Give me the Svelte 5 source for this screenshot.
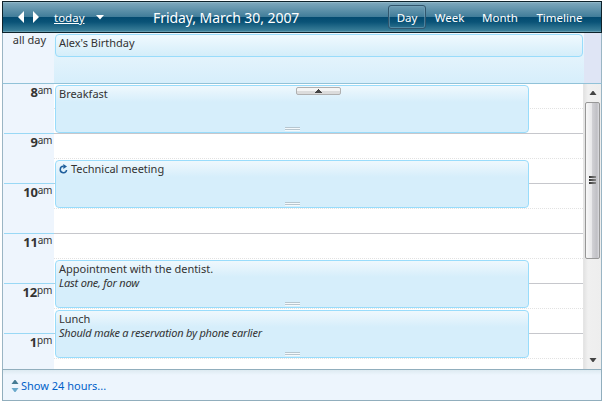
<script>
  const views = [
    { name: 'Day', w: 38 },
    { name: 'Week', w: 47 },
    { name: 'Month', w: 54 },
    { name: 'Timeline', w: 65 }
  ];
  const hours = [
    { n: 8, m: 'am' },
    { n: 9, m: 'am' },
    { n: 10, m: 'am' },
    { n: 11, m: 'am' },
    { n: 12, m: 'pm' },
    { n: 1, m: 'pm' }
  ];
  const appointments = [
    { title: 'Breakfast', gap: 1 },
    { title: 'Technical meeting', recurring: true, gap: 27 },
    { title: 'Appointment with the dentist.', note: 'Last one, for now', gap: 52 },
    { title: 'Lunch', note: 'Should make a reservation by phone earlier', gap: 2 }
  ];
</script>

<div class="scheduler">
  <header>
    <div class="nav">
      <svg width="22" height="12" viewBox="0 0 22 12" fill="#fff"><path d="M6 0v12L0 6zM15 0v12l6-6z" /></svg>
      <a class="today">today</a>
      <svg class="drop" width="8" height="5" viewBox="0 0 8 5" fill="#fff"><path d="M0 0h8L4 4.5z" /></svg>
    </div>
    <h1>Friday, March 30, 2007</h1>
    <nav>
      {#each views as v, i}
        <a class:selected={i === 0} style="width:{v.w}px">{v.name}</a>
      {/each}
    </nav>
  </header>

  <section class="allday">
    <div class="label">all day</div>
    <div class="allcell"><div class="event top"><span class="title">Alex's Birthday</span></div></div>
    <div class="corner"></div>
  </section>

  <section class="body">
    <div class="times">
      {#each hours as h}
        <div class="time"><b>{h.n}</b><span>{h.m}</span></div>
      {/each}
    </div>
    <div class="slots">
      <div class="lines">
        {#each hours as h}
          <div class="hour"><div class="half"></div></div>
        {/each}
      </div>
      <div class="events">
        {#each appointments as a}
          <div class="event" style="margin-top:{a.gap}px">
            <div class="title">
              {#if a.recurring}
                <svg class="recur" width="9" height="10" viewBox="0 0 9 10"><path d="M4.6 2.3A3.2 3.2 0 1 0 7.600 6" fill="none" stroke="#1f5f9c" stroke-width="1.5" /><path d="M4.300 0L8 2.500 4.300 5z" fill="#1f5f9c" /></svg>
              {/if}{a.title}
            </div>
            {#if a.note}<div class="note">{a.note}</div>{/if}
            <i class="grip"></i>
          </div>
        {/each}
      </div>
      <div class="earlier"><svg width="7" height="4" viewBox="0 0 7 4" fill="#444"><path d="M3 0h1v1h1v1h1v1h1v1H0V3h1V2h1V1h1z" /></svg></div>
    </div>
    <div class="scroll">
      <svg class="up" width="8" height="4" viewBox="0 0 8 4" fill="#444"><path d="M3.5 0h1L7.5 4h-7z" /></svg>
      <div class="thumb"><i></i><i></i><i></i></div>
      <svg class="down" width="8" height="4" viewBox="0 0 8 4" fill="#444"><path d="M.5 0h7L4.5 4h-1z" /></svg>
    </div>
  </section>

  <footer>
    <svg width="8" height="12" viewBox="0 0 8 12"><path d="M3.5 0h1l3 4h-7z" fill="#457b94" /><path d="M.5 8h7l-3 4h-1z" fill="#6ba9cb" /></svg>
    <a>Show 24 hours...</a>
  </footer>
</div>

<style>
  :global(body) { background: #fff; overflow: hidden; }
  .scheduler {
    width: 600px; height: 400px; margin: 1px 0 0 2px; box-sizing: border-box;
    font: 11px/14px "Noto Sans", "Open Sans", sans-serif; color: #333; background: #fff;
  }
  header {
    height: 32px; box-sizing: border-box; border: 1px solid #0d222b; display: flex;
    color: #fff;
    background: linear-gradient(#a4c8d6 0, #7ba6bb 1px, #407c99 15px, #034a70 15px, #0a5377 20px, #3b7f99 29px, #8dbdcb 30px);
  }
  .nav { width: 150px; display: flex; align-items: flex-start; padding-left: 15px; box-sizing: border-box; }
  .nav svg { margin-top: 9px; flex: none; }
  .today { margin: 8px 0 0 14px; width: 30px; text-decoration: underline; font-size: 11.5px; line-height: 15px; }
  .nav .drop { margin: 13px 0 0 12px; }
  h1 { font: 14px/19px "Noto Sans", "Open Sans", sans-serif; margin: 6px 0 0; width: 233px; white-space: nowrap; letter-spacing: -0.06px; }
  nav { display: flex; padding: 3px 0 0 2px; }
  nav a { box-sizing: border-box; height: 24px; line-height: 25px; text-align: center; font-size: 11.5px; }
  nav .selected { border: 1px solid #31566d; border-radius: 3px; line-height: 23px; box-shadow: inset 0 0 0 1px #78a5bb88; }

  .allday { height: 51px; box-sizing: border-box; display: flex; border: solid #9ab5c4; border-width: 0 1px 1px; border-bottom-color: #91c2d8; }
  .label { width: 51px; background: #eef5fd; padding-right: 8px; box-sizing: border-box; text-align: right; }
  .allcell { width: 530px; background: linear-gradient(#f0f8fd, #d6eefb); padding: 1px 1px 0; box-sizing: border-box; }
  .corner { flex: 1; background: #dfe5f5; }

  .event {
    box-sizing: border-box; width: 474px; height: 48px; border: 1px solid #99dcfb; border-radius: 4px;
    background: linear-gradient(#eff8fd, #d6eefb 16px); padding: 1px 0 0 3px; position: relative; white-space: nowrap;
  }
  .event.top { width: 528px; height: 23px; background: linear-gradient(#f0f9fe, #d4eefa); }
  .recur { margin-right: 3px; vertical-align: -1px; }
  .title { height: 14px; letter-spacing: -0.02px; }
  .note { font-style: italic; letter-spacing: -0.22px; }
  .grip { position: absolute; left: 229px; bottom: 2px; width: 15px; height: 1px; border: solid #b7c6cf; border-width: 1px 0; background: #f4fafd; box-shadow: 0 1px #f4fafd; }

  .body { height: 285px; display: flex; border: solid #9ab5c4; border-width: 0 1px; box-sizing: border-box; }
  .times { width: 51px; height: 285px; background: #eef5fd; flex: none; }
  .time { height: 50px; box-sizing: border-box; display: flex; justify-content: flex-end; padding-right: 2px; margin-left: 1px; border-bottom: 1px solid #99d8f5; }
  .time:last-child { height: 35px; border: 0; }
  .time b { font-size: 13px; line-height: 16px; letter-spacing: -0.2px; }
  .time span { font-size: 10px; line-height: 12px; letter-spacing: -0.3px; }
  .slots { width: 530px; display: grid; grid-template-columns: 529px; position: relative; border-right: 1px solid #e5e5e5; box-sizing: border-box; overflow: hidden; }
  .lines, .events { grid-area: 1 / 1; }
  .hour { height: 50px; box-sizing: border-box; border-bottom: 1px solid #c6c7cc; }
  .half { height: 25px; box-sizing: border-box; border-bottom: 1px dotted #e2e2e2; }
  .events { padding-left: 1px; display: flow-root; }
  .earlier {
    position: absolute; left: 242px; top: 3px; width: 45px; height: 8px; box-sizing: border-box; display: flex; justify-content: center; align-items: center;
    border: 1px solid #b0b0b0; border-radius: 2px; background: linear-gradient(#f5f5f5 50%, #dcdcdc 50%);
  }
  .scroll { flex: 1; display: flex; flex-direction: column; align-items: center; background: linear-gradient(90deg, #e3e3e3, #f0f0f0 4px, #eee); }
  .up { margin: 7px 0; }
  .thumb {
    width: 15px; height: 157px; box-sizing: border-box; border: 1px solid #979797; border-radius: 2px;
    background: linear-gradient(90deg, #f8f8f8, #e8e8ea 45%, #d0d0d4 50%, #c0c0c5 85%, #dedee2);
    display: flex; flex-direction: column; gap: 1px; align-items: center; justify-content: center;
  }
  .thumb i { width: 7px; height: 2px; background: linear-gradient(90deg, #333, #888); }
  .thumb i:last-child { margin-bottom: 2px; }
  .down { margin: auto 0 7px; }

  footer {
    height: 32px; box-sizing: border-box; border: 1px solid #91aebd; display: flex; align-items: center;
    padding: 2px 0 0 8px; gap: 2px; background: linear-gradient(#ddeaf1, #edf5fd 5px);
  }
  footer a { color: #0061c9; }
</style>
